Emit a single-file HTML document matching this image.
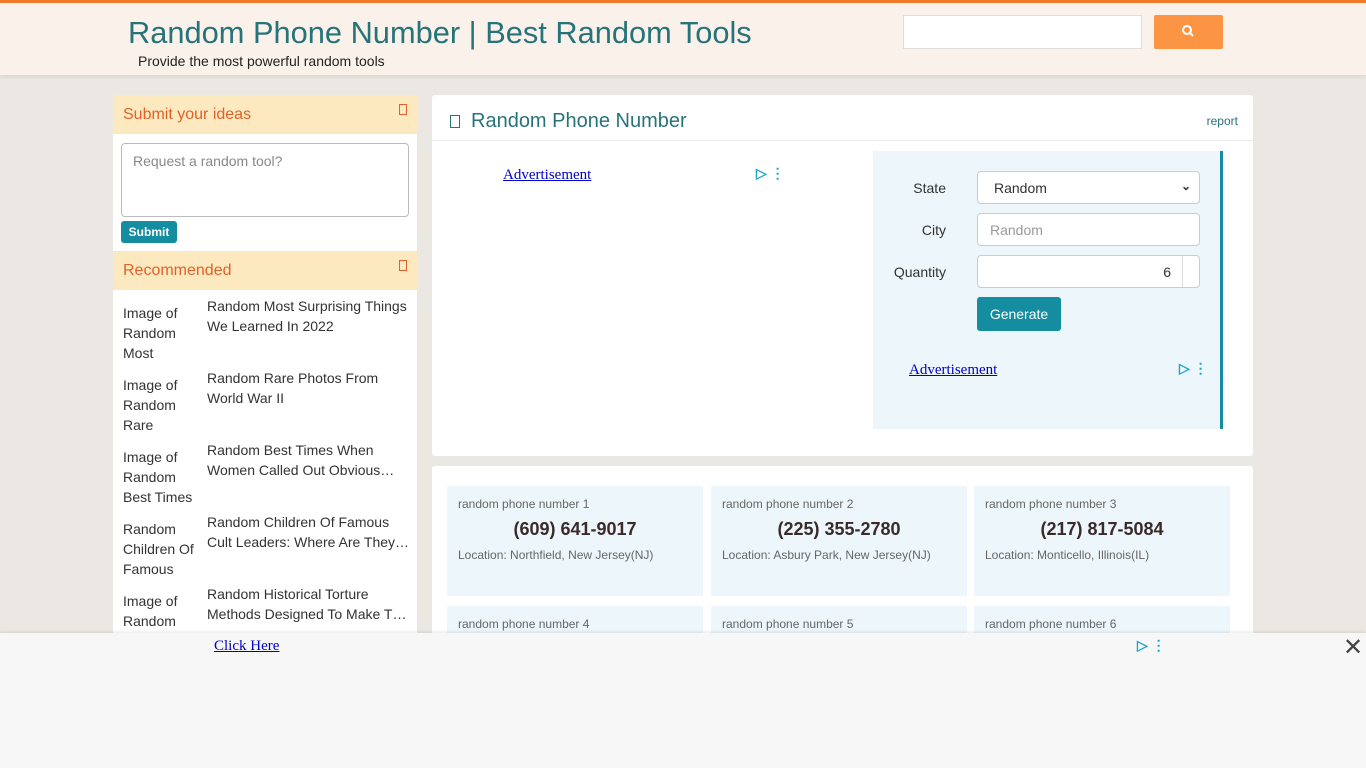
<!DOCTYPE html>
<html><head><meta charset="utf-8"><style>
*{box-sizing:border-box;margin:0;padding:0}
body{width:1366px;height:768px;overflow:hidden;background:#ebe7e2;font-family:"Liberation Sans",Arial,sans-serif;position:relative}
.a{position:absolute}
.hdr{left:0;top:0;width:1366px;height:75px;background:#fbf1eb;border-top:3px solid #f07a2a;box-shadow:0 2px 4px rgba(0,0,0,.08)}
.ttl{left:128px;top:15px;font-size:30.8px;color:#27737a;white-space:nowrap}
.sub{left:138px;top:53px;font-size:14px;color:#222}
.srch{left:903px;top:15px;width:239px;height:34px;background:#fff;border:1px solid #ddd}
.sbtn{left:1154px;top:15px;width:69px;height:34px;background:#fb9544;border-radius:2px}
.side{left:113px;top:95px;width:304px;height:540px;background:#fff}
.sh{position:absolute;left:0;width:304px;height:39px;background:#fde9bf;color:#e0622b;font-size:16px;padding:11px 10px}
.sh i{position:absolute;right:10px;top:9px;width:8px;height:11px;border:1px solid #e0622b;font-style:normal}
.ta{left:8px;top:48px;width:288px;height:74px;border:1px solid #bbb;border-radius:4px;color:#888;font-size:14px;padding:9px 11px}
.subm{left:8px;top:126px;width:56px;height:22px;background:#138d9f;color:#fff;font-size:12px;font-weight:bold;border-radius:3px;text-align:center;line-height:22px}
.rec{position:absolute;left:10px;width:290px;font-size:14px;color:#333;line-height:20px}
.rec .im{position:absolute;left:0;top:4px;width:80px}
.rec .tx{position:absolute;left:84px;top:-3px;width:206px;overflow:hidden}
.main{left:432px;top:95px;width:821px;height:361px;background:#fff;border-radius:3px}
.mt{left:39px;top:15px;font-size:20px;color:#27737a}
.mi{left:18px;top:20px;width:10px;height:13px;border:1px solid #27737a}
.rep{right:15px;top:19px;font-size:12px;color:#27737a}
.hl{left:0;top:45px;width:821px;height:1px;background:#eee}
.adl{font-family:"Liberation Serif",serif;font-size:15px;color:#00c;text-decoration:underline;padding-left:16px}
.form{left:441px;top:56px;width:350px;height:278px;background:#edf6fa;border-right:3px solid #138d9f}
.lbl{position:absolute;font-size:14px;color:#333;text-align:right;width:73px;left:0}
.inp{position:absolute;left:104px;width:223px;height:33px;background:#fff;border:1px solid #ccc;border-radius:4px;font-size:14px}
.gen{left:104px;top:146px;width:84px;height:34px;background:#138d9f;color:#fff;font-size:14px;border-radius:3px;text-align:center;line-height:34px;position:absolute}
.res{left:432px;top:466px;width:821px;height:180px;background:#fff;border-radius:3px}
.card{position:absolute;width:256px;height:110px;background:#edf6fa;border-radius:2px;padding:11px 11px}
.card .l{font-size:12px;color:#666}
.card .n{font-size:18px;font-weight:bold;color:#3a2a2a;text-align:center;margin-top:8px}
.card .loc{font-size:12px;color:#666;margin-top:8px}
.bot{left:0;top:633px;width:1366px;height:135px;background:#f7f7f7;box-shadow:0 -1px 3px rgba(0,0,0,.1)}
.play{color:#1aa6c8;font-size:14px;font-weight:bold}
</style></head><body>
<div class="a hdr"></div>
<div class="a ttl">Random Phone Number | Best Random Tools</div>
<div class="a sub">Provide the most powerful random tools</div>
<div class="a srch"></div>
<div class="a sbtn"><svg width="69" height="34"><circle cx="33" cy="15" r="4" fill="none" stroke="#fff" stroke-width="2"/><line x1="36" y1="18" x2="39" y2="21" stroke="#fff" stroke-width="2"/></svg></div>

<div class="a side">
<div class="sh" style="top:0">Submit your ideas<i></i></div>
<div class="a ta">Request a random tool?</div>
<div class="a subm">Submit</div>
<div class="sh" style="top:156px">Recommended<i></i></div>
<div class="rec" style="top:204px"><div class="im">Image of Random Most</div><div class="tx">Random Most Surprising Things We Learned In 2022</div></div>
<div class="rec" style="top:276px"><div class="im">Image of Random Rare</div><div class="tx">Random Rare Photos From World War II</div></div>
<div class="rec" style="top:348px"><div class="im">Image of Random Best Times</div><div class="tx" style="height:40px">Random Best Times When Women Called Out Obvious…</div></div>
<div class="rec" style="top:420px"><div class="im">Random Children Of Famous</div><div class="tx" style="height:40px">Random Children Of Famous Cult Leaders: Where Are They…</div></div>
<div class="rec" style="top:492px"><div class="im">Image of Random</div><div class="tx" style="height:40px">Random Historical Torture Methods Designed To Make T…</div></div>
</div>

<div class="a main">
<div class="a mi"></div>
<div class="a mt">Random Phone Number</div>
<div class="a rep">report</div>
<div class="a hl"></div>
<div class="a adl" style="left:55px;top:72px">Advertisement</div>
<div class="a play" style="left:324px;top:70px">▷ ⋮</div>
<div class="a form">
<div class="lbl" style="top:29px">State</div>
<div class="inp" style="top:20px;padding:8px 16px;color:#333">Random<span style="position:absolute;right:8px;top:7px;font-size:12px;font-weight:bold">⌄</span></div>
<div class="lbl" style="top:71px">City</div>
<div class="inp" style="top:62px;padding:8px 12px;color:#999">Random</div>
<div class="lbl" style="top:113px">Quantity</div>
<div class="inp" style="top:104px;padding:8px 28px;text-align:right;color:#333">6<span style="position:absolute;right:0;top:0;width:17px;height:31px;border-left:1px solid #ddd"></span></div>
<div class="gen">Generate</div>
<div class="a adl" style="left:20px;top:211px">Advertisement</div>
<div class="a play" style="left:306px;top:209px">▷ ⋮</div>
</div>
</div>

<div class="a res">
<div class="card" style="left:15px;top:20px"><div class="l">random phone number 1</div><div class="n">(609) 641-9017</div><div class="loc">Location: Northfield, New Jersey(NJ)</div></div>
<div class="card" style="left:279px;top:20px"><div class="l">random phone number 2</div><div class="n">(225) 355-2780</div><div class="loc">Location: Asbury Park, New Jersey(NJ)</div></div>
<div class="card" style="left:542px;top:20px"><div class="l">random phone number 3</div><div class="n">(217) 817-5084</div><div class="loc">Location: Monticello, Illinois(IL)</div></div>
<div class="card" style="left:15px;top:140px"><div class="l">random phone number 4</div></div>
<div class="card" style="left:279px;top:140px"><div class="l">random phone number 5</div></div>
<div class="card" style="left:542px;top:140px"><div class="l">random phone number 6</div></div>
</div>

<div class="a bot">
<div class="a adl" style="left:198px;top:5px">Click Here</div>
<div class="a play" style="left:1137px;top:4px">▷ ⋮</div>
<div class="a" style="left:1343px;top:0;font-size:24px;color:#444">✕</div>
</div>
</body></html>
